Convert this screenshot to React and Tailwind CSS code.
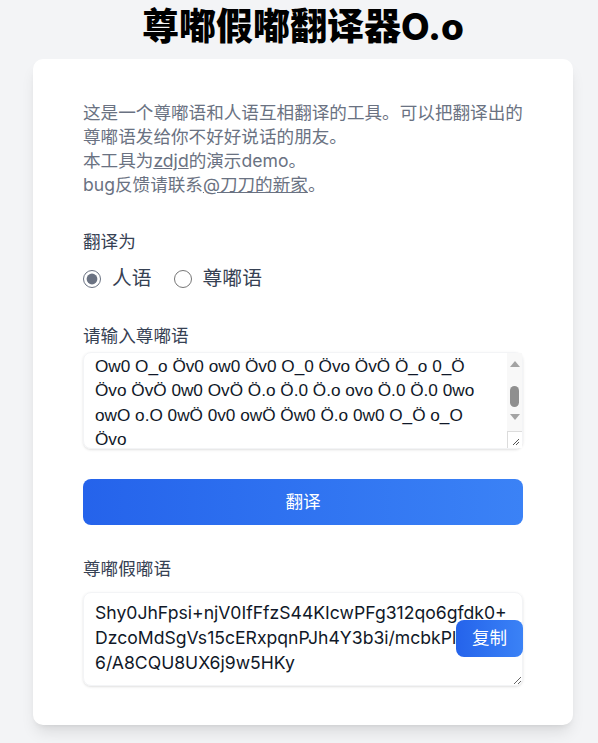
import { useState } from 'react';

const inputText =
  'Ö.o Övo 0w0 O_o ÖvÖ o_O Ö_o 0v0\n' +
  'owO Ö.0 0_Ö Övo O.o ow0 0wÖ\n' +
  'Ö_Ö 0vo Ö.o OwO o_0 Öv0 ÖwÖ\n' +
  'Ow0 O_o Öv0 ow0 Öv0 O_0 Övo ÖvÖ Ö_o 0_Ö Övo ÖvÖ 0w0 OvÖ Ö.o Ö.0 Ö.o ovo Ö.0 Ö.0 0wo owO o.O 0wÖ 0v0 owÖ Öw0 Ö.o 0w0 O_Ö o_O Övo\n' +
  'Öw0 o.O 0v0 O_Ö ovo Ö.0 ÖwÖ\n' +
  'o_O Övo 0wo';

const outputText =
  'Shy0JhFpsi+njV0IfFfzS44KIcwPFg312qo6gfdk0+\nDzcoMdSgVs15cERxpqnPJh4Y3b3i/mcbkPlHk\n6/A8CQU8UX6j9w5HKy';

// classic scrollbar look, drawn over the textarea
function FakeScrollbar() {
  return (
    <div className="absolute right-[1px] top-[1px] bottom-[1px] w-[15px] flex flex-col bg-[#f8f8f8] pointer-events-none">
      <div className="h-[78px] flex flex-col items-center">
        <svg width="10" height="6" viewBox="0 0 10 6" className="mt-[8px]">
          <path d="M0 6 L5 0 L10 6 Z" fill="#a3a3a3" />
        </svg>
        <div className="mt-[19px] w-[9px] h-[21px] rounded-full bg-[#8f8f8f]" />
        <svg width="10" height="6" viewBox="0 0 10 6" className="mt-[7px]">
          <path d="M0 0 L5 6 L10 0 Z" fill="#a3a3a3" />
        </svg>
      </div>
      <div className="flex-1 bg-white border-t border-l border-[#dcdcdc] flex items-end justify-end">
        <svg width="10" height="10" viewBox="0 0 10 10" className="mb-[2px] mr-[2px]">
          <path d="M9 3 L3 9 M9 6 L6 9" stroke="#555" strokeWidth="1" />
        </svg>
      </div>
    </div>
  );
}

export default function App() {
  const [mode, setMode] = useState('human');

  return (
    <div className="min-h-[743px] bg-gray-100 pl-2 pt-[6px] pb-4 font-['Inter','Noto_Sans_CJK_SC',sans-serif] text-[17.6px]">
      <h1 className="text-center text-[37px] leading-[42px] font-extrabold text-black mb-[11px]">
        尊嘟假嘟翻译器O.o
      </h1>

      <div className="mx-auto w-[540px] bg-white rounded-[10px] shadow-lg px-[50px] pt-[42px] pb-[39px]">
        {/* Intro */}
        <p className="text-gray-500 leading-[24px]">
          这是一个尊嘟语和人语互相翻译的工具。可以把翻译出的尊嘟语发给你不好好说话的朋友。
          <br />
          本工具为<a className="underline">zdjd</a>的演示demo。
          <br />
          bug反馈请联系<a className="underline">@刀刀的新家</a>。
        </p>

        {/* Mode */}
        <div className="mt-[33px] text-gray-700 leading-[24px]">翻译为</div>
        <div className="mt-[11px] flex items-center h-[28px] text-[19.8px] text-gray-700">
          <label className="flex items-center gap-[11px]">
            <input
              type="radio"
              name="mode"
              checked={mode === 'human'}
              onChange={() => setMode('human')}
              className="w-[18px] h-[18px] accent-gray-500"
            />
            人语
          </label>
          <label className="flex items-center gap-[11px] ml-[22px]">
            <input
              type="radio"
              name="mode"
              checked={mode === 'zdjd'}
              onChange={() => setMode('zdjd')}
              className="w-[18px] h-[18px] accent-gray-500"
            />
            尊嘟语
          </label>
        </div>

        {/* Input */}
        <div className="mt-[31px] text-gray-700 leading-[24px]">请输入尊嘟语</div>
        <div className="relative mt-[4px]">
          <textarea
            ref={(el) => {
              if (el) el.scrollTop = 81;
            }}
            defaultValue={inputText}
            spellCheck={false}
            className="block w-full h-[97px] resize-none rounded-lg border border-gray-100 shadow-sm pl-[11px] pr-[27px] py-[8px] font-['Liberation_Sans',Arial,sans-serif] text-[17.2px] leading-[24.5px] text-gray-900 overflow-y-scroll outline-none"
          />
          <FakeScrollbar />
        </div>

        <button className="mt-[30px] w-full h-[46px] rounded-lg bg-gradient-to-r from-[#2563eb] to-[#3b82f6] text-white">
          翻译
        </button>

        {/* Output */}
        <div className="mt-[32px] text-gray-700 leading-[24px]">尊嘟假嘟语</div>
        <div className="relative mt-[11px]">
          <textarea
            readOnly
            defaultValue={outputText}
            spellCheck={false}
            className="block w-full h-[94px] rounded-lg border border-gray-100 shadow-sm px-[11px] py-[7px] text-[17.6px] leading-[25px] text-gray-900 outline-none"
          />
          <button className="absolute right-0 top-[28px] w-[67px] h-[37px] rounded-lg bg-gradient-to-r from-[#2563eb] to-[#3b82f6] text-white">
            复制
          </button>
        </div>
      </div>
    </div>
  );
}
